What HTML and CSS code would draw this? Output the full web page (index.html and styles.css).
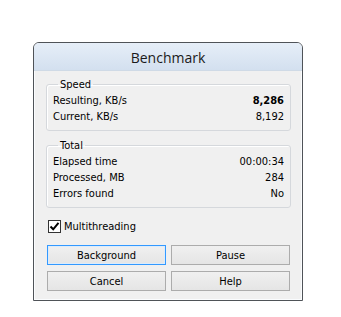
FILE: index.html
```html
<!DOCTYPE html>
<html lang="en">
<head>
    <meta charset="UTF-8">
    <title>Benchmark</title>
    <link rel="stylesheet" href="styles.css">
</head>
<body>
    <div class="window">
        <div class="titlebar">Benchmark</div>
        <div class="client">
            <fieldset class="group">
                <legend>Speed</legend>
                <div class="row"><span>Resulting, KB/s</span><b>8,286</b></div>
                <div class="row"><span>Current, KB/s</span><span>8,192</span></div>
            </fieldset>
            <fieldset class="group">
                <legend>Total</legend>
                <div class="row"><span>Elapsed time</span><span>00:00:34</span></div>
                <div class="row"><span>Processed, MB</span><span>284</span></div>
                <div class="row"><span>Errors found</span><span>No</span></div>
            </fieldset>
            <label class="check">
                <span class="box">
                    <svg width="11" height="11" viewBox="0 0 11 11"><path d="M1.5 5.5 L4.2 8.3 L9.5 1.8" fill="none" stroke="#000" stroke-width="2"/></svg>
                </span>
                Multithreading
            </label>
            <div class="buttons">
                <button class="btn default">Background</button>
                <button class="btn">Pause</button>
                <button class="btn">Cancel</button>
                <button class="btn">Help</button>
            </div>
        </div>
    </div>
</body>
</html>
```

FILE: styles.css
```css
body {
    margin: 0;
    background: #fff;
    font-family: "DejaVu Sans Condensed", "DejaVu Sans", sans-serif;
    font-size: 11px;
    color: #000;
}
.window {
    margin: 42px 0 0 33px;
    width: 268px;
    border: 1px solid #4f5358;
    border-radius: 6px 6px 0 0;
    background: #f0f0f0;
    box-shadow: inset 0 0 0 1px #fafcfe;
    overflow: hidden;
}
.titlebar {
    height: 27px;
    line-height: 29px;
    text-align: center;
    font-family: "Open Sans", sans-serif;
    font-size: 14px;
    color: #1a1a1a;
    background: linear-gradient(to bottom, #e6eef8, #d3e0ef);
    border-bottom: 1px solid #cfdae6;
}
.client {
    padding: 7px 11px 9px 12px;
}
.group {
    margin: 0 0 8px;
    padding: 2px 6px 5px;
    border: 1px solid #d5d8dc;
    border-radius: 3px;
    box-shadow: inset 1px 1px 0 #fff;
}
.group legend {
    padding: 0 2px;
    margin-left: 5px;
    line-height: 13px;
}
.row {
    display: flex;
    justify-content: space-between;
    line-height: 16px;
}
.check {
    display: flex;
    align-items: center;
    gap: 3px;
    margin: 12px 0 12px 2px;
    line-height: 13px;
}
.box {
    width: 11px;
    height: 11px;
    border: 1px solid #333;
    background: #fff;
    display: flex;
}
.buttons {
    display: grid;
    grid-template-columns: 1fr 1fr;
    gap: 6px 5px;
    padding: 0 1px 0 1px;
}
.btn {
    height: 20px;
    font-family: inherit;
    font-size: 11px;
    color: #000;
    border: 1px solid #acacac;
    border-radius: 0;
    background: linear-gradient(to bottom, #f0f0f0, #e5e5e5);
    padding: 0;
}
.btn.default {
    border-color: #3399ff;
    box-shadow: inset 0 0 0 1px #dcecfc;
}
```
